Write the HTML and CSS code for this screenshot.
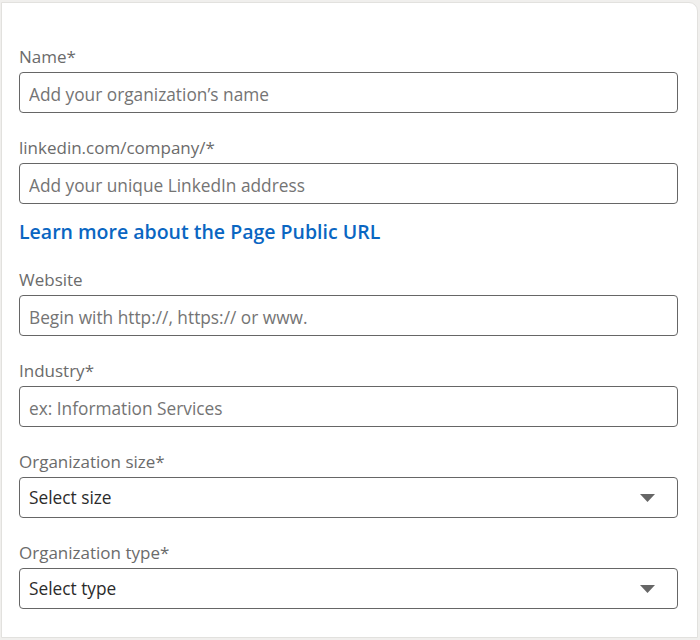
FILE: index.html
```html
<!DOCTYPE html>
<html lang="en">
<head>
<meta charset="utf-8">
<title>Create Page</title>
<link rel="stylesheet" href="styles.css">
</head>
<body>
<div class="card">
  <form class="form">
    <div class="field">
      <label class="label" for="name">Name*</label>
      <input class="input" id="name" type="text" placeholder="Add your organization’s name">
    </div>
    <div class="field field--url">
      <label class="label" for="url">linkedin.com/company/*</label>
      <input class="input" id="url" type="text" placeholder="Add your unique LinkedIn address">
    </div>
    <a class="link" href="#">Learn more about the Page Public URL</a>
    <div class="field">
      <label class="label" for="web">Website</label>
      <input class="input" id="web" type="text" placeholder="Begin with http://, https:// or www.">
    </div>
    <div class="field">
      <label class="label" for="ind">Industry*</label>
      <input class="input" id="ind" type="text" placeholder="ex: Information Services">
    </div>
    <div class="field">
      <span class="label">Organization size*</span>
      <div class="select">
        <span class="select-text">Select size</span>
        <svg class="caret" width="15" height="8" viewBox="0 0 15 8"><path d="M0 0H15L7.5 8Z" fill="#666"/></svg>
      </div>
    </div>
    <div class="field">
      <span class="label">Organization type*</span>
      <div class="select">
        <span class="select-text">Select type</span>
        <svg class="caret" width="15" height="8" viewBox="0 0 15 8"><path d="M0 0H15L7.5 8Z" fill="#666"/></svg>
      </div>
    </div>
  </form>
</div>
</body>
</html>
```

FILE: styles.css
```css
* { box-sizing: border-box; }
html, body { height: 100%; }
body {
  margin: 0;
  padding: 2px 2px 2px 1px;
  background: #f0efed;
  font-family: "Open Sans", "Noto Sans", "Liberation Sans", sans-serif;
}
.card {
  height: 636px;
  background: #fff;
  border: 1px solid #e2e1de;
  border-radius: 0 9px 0 0;
  padding: 42px 19px 0 17px;
}
.form {
  display: flex;
  flex-direction: column;
}
.field {
  display: flex;
  flex-direction: column;
  margin-bottom: 23px;
}
.field--url { margin-bottom: 16px; }
.label {
  font-size: 17px;
  line-height: 24px;
  height: 24px;
  margin-bottom: 3px;
  color: #6b6b6b;
}
.input, .select {
  height: 41px;
  width: 100%;
  border: 1px solid #666;
  border-radius: 4px;
  padding: 0 9px;
  font-family: inherit;
  font-size: 17.3px;
  color: #333;
  background: #fff;
  outline: none;
}
.input { padding-top: 3px; }
.input::placeholder { color: #747474; opacity: 1; }
.select {
  display: flex;
  align-items: center;
  justify-content: space-between;
  padding-right: 22px;
}
.select-text { color: #2b2b2b; }
.caret { display: block; }
.link {
  align-self: flex-start;
  font-size: 19.5px;
  line-height: 24px;
  font-weight: 600;
  color: #0a66c2;
  text-decoration: none;
  margin-bottom: 24px;
}
```
